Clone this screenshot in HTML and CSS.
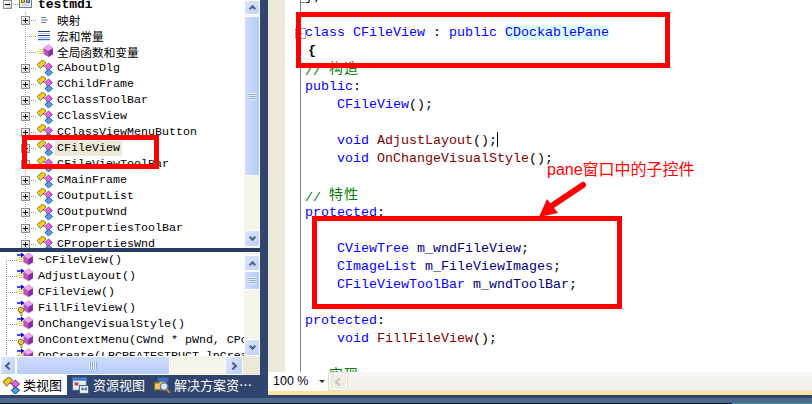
FILE: index.html
```html
<!DOCTYPE html>
<html lang="zh">
<head>
<meta charset="utf-8">
<title>testmdi</title>
<link rel="stylesheet" href="styles.css">
</head>
<body>
<svg class="defs" width="0" height="0" aria-hidden="true">
  <symbol id="cls" viewBox="0 0 16 16">
    <path d="M5 6H10M10 6V12" fill="none" stroke="#555" stroke-width="1"/>
    <polygon points="0,4.500 5.500,0 9,3 3.500,8.500" fill="#f4c92e" stroke="#9a7c18"/>
    <polygon points="8,6.500 11.500,3 15.500,6.500 11.500,10" fill="#ee62e4" stroke="#8e3c9e"/>
    <polygon points="8,12.500 12,9.500 15.500,12.500 11.500,16" fill="#4ea4ec" stroke="#205fa8"/>
  </symbol>
  <symbol id="cube" viewBox="0 0 16 16">
    <polygon points="6.500,4 11.500,0.500 16.500,4 16.500,10 11.500,13 6.500,10" fill="#b650cc"/>
    <polygon points="6.500,4 11.500,0.500 16.500,4 11.500,7" fill="#eaa4f2"/>
    <polygon points="11.500,7 16.500,4 16.500,10 11.500,13" fill="#86309a"/>
  </symbol>
  <symbol id="lines" viewBox="0 0 16 16">
    <path d="M2 5.500H7M0 7.500H7M2 9.500H7" stroke="#e4d060" stroke-width="1.200" fill="none"/>
  </symbol>
  <symbol id="arrow" viewBox="0 0 16 16">
    <path d="M0 3H6" stroke="#0000c0" stroke-width="1.400"/>
    <polygon points="4,0.500 7.500,3 4,5.500" fill="#0000c0"/>
  </symbol>
  <symbol id="key" viewBox="0 0 16 16">
    <circle cx="4" cy="10" r="2.800" fill="#ecc53e" stroke="#8e7014"/>
    <path d="M4 12.500V16M4 15H6" stroke="#a88820" stroke-width="1.200" fill="none"/>
  </symbol>
  <symbol id="macro" viewBox="0 0 16 16">
    <path d="M1 3.500H13" stroke="#20408c" stroke-width="1"/>
    <path d="M1 5.500H13" stroke="#a8c4ec" stroke-width="1"/>
    <path d="M1 7.500H13" stroke="#20408c" stroke-width="1"/>
    <path d="M1 9.500H13" stroke="#a8c4ec" stroke-width="1"/>
    <path d="M1 11.500H13" stroke="#3a6cc4" stroke-width="1.400"/>
  </symbol>
  <symbol id="map" viewBox="0 0 16 16">
    <path d="M4 5.500H9M4 8H11M4 10.500H9" stroke="#6a7fa8" stroke-width="1"/>
  </symbol>
  <symbol id="proj" viewBox="0 0 17 16">
    <rect x="1.500" y="3.500" width="12" height="11" fill="#f4f0e0" stroke="#6c7a90"/>
    <rect x="3.500" y="6.500" width="3" height="3" fill="#e8b838" stroke="#8a7020"/>
    <rect x="8.500" y="6.500" width="3" height="3" fill="#7ea4dc" stroke="#4a6a9c"/>
    <rect x="3.500" y="11" width="8" height="2" fill="#c8d0dc"/>
    <path d="M13 0V6M10 3H16" stroke="#e8b020" stroke-width="2"/>
  </symbol>
  <symbol id="res" viewBox="0 0 16 16">
    <rect x="0.500" y="0.500" width="13" height="12" fill="#e8f0fc" stroke="#3a68b0"/>
    <rect x="1" y="1" width="12" height="2.500" fill="#3a78d0"/>
    <rect x="2.500" y="5" width="3.500" height="3" fill="#d84030"/>
    <rect x="7" y="8" width="8.500" height="7.500" fill="#f0f0f0" stroke="#50607c"/>
    <rect x="9" y="10" width="2" height="2.500" fill="#3a68b0"/>
    <rect x="12" y="10" width="2" height="2.500" fill="#3a68b0"/>
  </symbol>
  <symbol id="sol" viewBox="0 0 16 16">
    <path d="M0.500 5.500H4.500L6 3.500H11V12H0.500Z" fill="#f0cc5c" stroke="#8a7020"/>
    <rect x="3.500" y="0.500" width="10" height="4" fill="#3a70c0"/>
    <circle cx="9.500" cy="9" r="3.500" fill="#d8ecf8" stroke="#607890" stroke-width="1.300"/>
    <path d="M12 11.500L15 15" stroke="#b08830" stroke-width="2"/>
  </symbol>
</svg>

<div class="app">
  <div class="main">
    <aside class="side">
      <div class="pane pane-top">
        <ul class="tree">
          <li class="row root"><span class="exp minus"></span><svg class="ic root-ic"><use href="#proj"/></svg><b class="root-name">testmdi</b></li>
          <li class="row"><span class="exp"></span><svg class="ic"><use href="#map"/></svg><span>映射</span></li>
          <li class="row"><span class="exp none"></span><svg class="ic"><use href="#macro"/></svg><span>宏和常量</span></li>
          <li class="row"><span class="exp none"></span><svg class="ic"><use href="#lines"/><use href="#cube"/></svg><span>全局函数和变量</span></li>
          <li class="row"><span class="exp"></span><svg class="ic"><use href="#cls"/></svg><span>CAboutDlg</span></li>
          <li class="row"><span class="exp"></span><svg class="ic"><use href="#cls"/></svg><span>CChildFrame</span></li>
          <li class="row"><span class="exp"></span><svg class="ic"><use href="#cls"/></svg><span>CClassToolBar</span></li>
          <li class="row"><span class="exp"></span><svg class="ic"><use href="#cls"/></svg><span>CClassView</span></li>
          <li class="row"><span class="exp"></span><svg class="ic"><use href="#cls"/></svg><span>CClassViewMenuButton</span></li>
          <li class="row"><span class="exp"></span><svg class="ic"><use href="#cls"/></svg><span class="sel">CFileView</span></li>
          <li class="row"><span class="exp"></span><svg class="ic"><use href="#cls"/></svg><span>CFileViewToolBar</span></li>
          <li class="row"><span class="exp"></span><svg class="ic"><use href="#cls"/></svg><span>CMainFrame</span></li>
          <li class="row"><span class="exp"></span><svg class="ic"><use href="#cls"/></svg><span>COutputList</span></li>
          <li class="row"><span class="exp"></span><svg class="ic"><use href="#cls"/></svg><span>COutputWnd</span></li>
          <li class="row"><span class="exp"></span><svg class="ic"><use href="#cls"/></svg><span>CPropertiesToolBar</span></li>
          <li class="row"><span class="exp"></span><svg class="ic"><use href="#cls"/></svg><span>CPropertiesWnd</span></li>
        </ul>
        <div class="vbar">
          <span class="btn up"><i></i></span>
          <span class="thumb thumb-a"><i class="grip"></i></span>
          <span class="track"></span>
          <span class="btn down"><i></i></span>
        </div>
      </div>
      <div class="split"></div>
      <div class="pane pane-low">
        <ul class="members">
          <li class="mrow"><svg class="ic"><use href="#lines"/><use href="#arrow"/><use href="#cube"/></svg><span>~CFileView()</span></li>
          <li class="mrow"><svg class="ic"><use href="#lines"/><use href="#arrow"/><use href="#cube"/></svg><span>AdjustLayout()</span></li>
          <li class="mrow"><svg class="ic"><use href="#lines"/><use href="#arrow"/><use href="#cube"/></svg><span>CFileView()</span></li>
          <li class="mrow"><svg class="ic"><use href="#arrow"/><use href="#key"/><use href="#cube"/></svg><span>FillFileView()</span></li>
          <li class="mrow"><svg class="ic"><use href="#lines"/><use href="#arrow"/><use href="#cube"/></svg><span>OnChangeVisualStyle()</span></li>
          <li class="mrow"><svg class="ic"><use href="#arrow"/><use href="#key"/><use href="#cube"/></svg><span>OnContextMenu(CWnd * pWnd, CPoint point)</span></li>
          <li class="mrow"><svg class="ic"><use href="#lines"/><use href="#arrow"/><use href="#cube"/></svg><span>OnCreate(LPCREATESTRUCT lpCreateStruct)</span></li>
        </ul>
        <div class="vbar">
          <span class="btn up low-up"><i></i></span>
          <span class="thumb thumb-b"><i class="grip"></i></span>
          <span class="track"></span>
          <span class="btn down"><i></i></span>
        </div>
      </div>
      <div class="hbar">
        <span class="hbtn left"><i></i></span>
        <span class="hthumb"><i class="hgrip"></i></span>
        <span class="htrack"></span>
        <span class="hbtn right"><i></i></span>
        <span class="corner"></span>
      </div>
      <nav class="tabs">
        <span class="tab active"><svg class="tab-ic"><use href="#cls"/></svg>类视图</span>
        <span class="tab"><svg class="tab-ic"><use href="#res"/></svg>资源视图</span>
        <span class="tab"><svg class="tab-ic"><use href="#sol"/></svg>解决方案资…</span>
      </nav>
    </aside>

    <section class="editor">
      <div class="strip"></div>
      <div class="doc">
        <div class="surface">
          <div class="margin"></div>
          <div class="code">
            <div class="ln fold-end"><span>};</span></div>
            <div class="ln">&nbsp;</div>
            <div class="ln fold"><span class="k">class CFileView</span> : <span class="k">public</span> <span class="k hl">CDockablePane</span></div>
            <div class="ln brace"><b>{</b></div>
            <div class="ln c">// <span class="cjk">构造</span></div>
            <div class="ln"><span class="k">public</span>:</div>
            <div class="ln">    <span class="k">CFileView</span>();</div>
            <div class="ln">&nbsp;</div>
            <div class="ln">    <span class="k">void</span> <span class="f">AdjustLayout</span>();<span class="caret"></span></div>
            <div class="ln">    <span class="k">void</span> <span class="f">OnChangeVisualStyle</span>();</div>
            <div class="ln">&nbsp;</div>
            <div class="ln c">// <span class="cjk">特性</span></div>
            <div class="ln"><span class="k">protected</span>:</div>
            <div class="ln">&nbsp;</div>
            <div class="ln">    <span class="k">CViewTree</span> <span class="v">m_wndFileView</span>;</div>
            <div class="ln">    <span class="k">CImageList</span> <span class="v">m_FileViewImages</span>;</div>
            <div class="ln">    <span class="k">CFileViewToolBar</span> <span class="v">m_wndToolBar</span>;</div>
            <div class="ln">&nbsp;</div>
            <div class="ln"><span class="k">protected</span>:</div>
            <div class="ln">    <span class="k">void</span> <span class="f">FillFileView</span>();</div>
            <div class="ln">&nbsp;</div>
            <div class="ln c">// <span class="cjk">实现</span></div>
          </div>
        </div>
        <div class="status">
          <span class="zoom">100 %<i class="caret-down"></i></span>
          <span class="sbtn"><i></i></span>
        </div>
        <div class="rule"></div>
      </div>
    </section>
  </div>
  <div class="foot"><div class="foot-a"></div><div class="foot-b"></div><div class="foot-c"><span class="foot-teal"></span></div></div>

  <div class="mark box-a"></div>
  <div class="mark box-b"></div>
  <div class="mark box-c"></div>
  <div class="note">pane窗口中的子控件</div>
  <svg class="pointer" width="812" height="404" aria-hidden="true">
    <path d="M583 185L550 207" stroke="#ff0000" stroke-width="6" stroke-linecap="round"/>
    <polygon points="539,217 547,199 558,213" fill="#ff0000"/>
  </svg>
</div>
</body>
</html>
```

FILE: styles.css
```css
* { box-sizing: border-box; }
html, body { margin: 0; padding: 0; background: #fff; overflow: hidden; }
.defs { display: block; height: 0; width: 0; }
ul { list-style: none; margin: 0; padding: 0; }

.app {
  position: relative;
  width: 812px;
  height: 404px;
  overflow: hidden;
  display: flex;
  flex-direction: column;
  font-family: "Liberation Mono", "Noto Sans CJK SC", monospace;
}
.main { display: flex; height: 395px; }

/* left column */
.side { width: 260px; display: flex; flex-direction: column; background: #fff; }
.pane { display: flex; overflow: hidden; background: #fff; }
.pane-top { height: 248px; }
.pane-low { height: 104px; }
.split { height: 4px; background: #2a3d63; }

.tree { width: 244px; margin-top: -4px; overflow: hidden; }
.row {
  height: 16px;
  display: flex;
  align-items: center;
  padding-left: 21px;
  font-size: 11.67px;
  color: #000;
  white-space: nowrap;
  background-image:
    repeating-linear-gradient(to bottom, #999 0 1px, transparent 1px 2px),
    repeating-linear-gradient(to right, #999 0 1px, transparent 1px 2px);
  background-size: 1px 16px, 12px 1px;
  background-position: 25px 0, 25px 8px;
  background-repeat: no-repeat;
}
.row.root {
  padding-left: 3px;
  background-image: repeating-linear-gradient(to right, #999 0 1px, transparent 1px 2px);
  background-size: 8px 1px;
  background-position: 11px 8px;
}
.root .exp { margin-right: 6px; }
.root-name { font-size: 13px; font-weight: 700; margin-left: 3px; }
.exp {
  position: relative;
  width: 9px;
  height: 9px;
  flex: none;
  margin-right: 7px;
  border: 1px solid #8a8f9a;
  background: linear-gradient(135deg, #fff, #d4d0c4);
}
.exp::before { content: ""; position: absolute; left: 1px; top: 3px; width: 5px; height: 1px; background: #000; }
.exp::after { content: ""; position: absolute; left: 3px; top: 1px; width: 1px; height: 5px; background: #000; }
.exp.minus::after { display: none; }
.exp.none { visibility: hidden; }
.ic { width: 16px; height: 16px; flex: none; margin-right: 4px; display: block; overflow: visible; }
.root-ic { width: 17px; margin-right: 0; margin-top: -6px; }
.sel { background: #ece9d8; line-height: 15px; margin-left: -2px; padding: 0 2px; }

.members { width: 244px; overflow: hidden; }
.mrow {
  height: 16px;
  display: flex;
  align-items: center;
  padding-left: 17px;
  font-size: 11.67px;
  white-space: nowrap;
  background-image:
    repeating-linear-gradient(to bottom, #999 0 1px, transparent 1px 2px),
    repeating-linear-gradient(to right, #999 0 1px, transparent 1px 2px);
  background-size: 1px 16px, 11px 1px;
  background-position: 6px 0, 6px 8px;
  background-repeat: no-repeat;
}
.mrow:first-child { background-size: 1px 8px, 11px 1px; background-position: 6px 8px, 6px 8px; }
.mrow .ic { margin-right: 5px; }

/* scrollbars */
.vbar { width: 16px; flex: none; display: flex; flex-direction: column; background: #f6f5ec; }
.btn {
  flex: none;
  height: 17px;
  display: flex;
  align-items: center;
  justify-content: center;
  background: linear-gradient(135deg, #dde7fd, #bdd0fb);
  border: 1px solid #fff;
  border-radius: 2px;
}
.btn i { width: 5px; height: 5px; border-left: 2px solid #4d6185; border-top: 2px solid #4d6185; }
.btn.up i { transform: translateY(1px) rotate(45deg); }
.btn.down i { transform: translateY(-1px) rotate(225deg); }
.btn.up { height: 15px; }
.low-up { margin-top: 3px; height: 16px !important; }
.thumb {
  flex: none;
  display: flex;
  align-items: center;
  justify-content: center;
  background: linear-gradient(to right, #cfdcfb, #b6cbfa);
  border: 1px solid #fff;
  border-radius: 2px;
}
.thumb-a { height: 160px; margin-top: 1px; }
.thumb-b { height: 19px; }
.track { flex: 1; }
.pane-top .btn.down { margin-bottom: 1px; }
.pane-low .btn.down { margin-bottom: 0; }
.grip {
  display: block;
  width: 7px;
  height: 7px;
  background: repeating-linear-gradient(to bottom, #eef3fe 0 1px, #8ba6dc 1px 2px);
}

.hbar { height: 19px; display: flex; background: #f6f5ec; }
.hbtn {
  width: 16px;
  flex: none;
  display: flex;
  align-items: center;
  justify-content: center;
  background: linear-gradient(135deg, #dde7fd, #bdd0fb);
  border: 1px solid #fff;
  border-radius: 2px;
}
.hbtn i { width: 6px; height: 6px; border-left: 2px solid #4d6185; border-top: 2px solid #4d6185; }
.hbtn.left i { transform: translateX(1px) rotate(-45deg); }
.hbtn.right i { transform: translateX(-1px) rotate(135deg); }
.hthumb {
  width: 154px;
  flex: none;
  display: flex;
  align-items: center;
  justify-content: center;
  background: linear-gradient(to bottom, #cfdcfb, #b6cbfa);
  border: 1px solid #fff;
  border-radius: 2px;
}
.hgrip {
  width: 8px;
  height: 7px;
  background: repeating-linear-gradient(to right, #eef3fe 0 1px, #8ba6dc 1px 2px);
}
.htrack { width: 55px; flex: none; }
.hbar .right { width: 18px; }
.corner { width: 17px; flex: none; background: #ece9d8; }

/* tabs */
.tabs {
  height: 20px;
  display: flex;
  background: #2c4068 repeating-conic-gradient(#2c4068 0 25%, #344a75 0 50%) 0 0 / 2px 2px;
  color: #fff;
  font-family: "Noto Sans CJK SC", sans-serif;
  font-size: 13px;
  line-height: 20px;
}
.tab { display: flex; align-items: center; white-space: nowrap; }
.tab:nth-child(1) { width: 67px; padding-left: 3px; background: #fff; color: #000; }
.tab:nth-child(2) { width: 87px; padding-left: 5px; }
.tab:nth-child(3) { padding-left: 0; }
.tab-ic { width: 17px; height: 17px; margin-right: 3px; flex: none; }
.tab:nth-child(2) .tab-ic { margin-right: 4px; }

/* editor */
.editor { flex: 1; display: flex; }
.strip { width: 8px; flex: none; background: #2c4068 repeating-conic-gradient(#2c4068 0 25%, #344a75 0 50%) 0 0 / 2px 2px; }
.doc { flex: 1; display: flex; flex-direction: column; }
.surface { height: 372px; display: flex; overflow: hidden; background: #fff; }
.margin { width: 17px; flex: none; background: #ece9d8; }
.code {
  margin-left: 15px;
  margin-top: -12px;
  padding-left: 4px;
  border-left: 1px solid #808080;
  flex: 1;
  font-size: 13.33px;
  color: #000;
}
.ln { position: relative; height: 18px; line-height: 18px; white-space: pre; }
.k { color: #0000ff; }
.f { color: #800000; }
.v { color: #000080; }
.c { color: #008000; }
.hl { background: #e0ffff; }
.cjk { font-family: "Noto Sans CJK SC", sans-serif; font-size: 14px; letter-spacing: 1px; position: relative; top: -2px; }
.brace { padding-left: 3px; }
.fold::before {
  content: "";
  position: absolute;
  left: -10px;
  top: 4px;
  width: 9px;
  height: 9px;
  border: 1px solid #a0a0a0;
  background: linear-gradient(#a0a0a0, #a0a0a0) center / 5px 1px no-repeat #fff;
}
.fold-end::before {
  content: "";
  position: absolute;
  left: -4px;
  top: 14px;
  width: 4px;
  height: 1px;
  background: #808080;
}
.caret { display: inline-block; width: 1px; height: 15px; background: #000; vertical-align: -3px; }

.status {
  height: 19px;
  display: flex;
  align-items: center;
  background: linear-gradient(#f8f7f3, #efede5);
}
.zoom {
  position: relative;
  width: 60px;
  height: 19px;
  padding-left: 5px;
  background: #fff;
  font-family: "Liberation Sans", sans-serif;
  font-size: 12.500px;
  line-height: 19px;
}
.caret-down {
  position: absolute;
  right: 3px;
  top: 8px;
  border: 3px solid transparent;
  border-top: 3px solid #333;
  border-bottom: 0;
}
.sbtn {
  width: 18px;
  height: 17px;
  margin-left: 1px;
  display: flex;
  align-items: center;
  justify-content: center;
  background: #efede4;
  border: 1px solid #fff;
  box-shadow: 0 0 0 1px #dedccf;
  border-radius: 2px;
}
.sbtn i { width: 6px; height: 6px; border-left: 2px solid #c8c6bc; border-top: 2px solid #c8c6bc; transform: translateX(1px) rotate(-45deg); }
.rule { height: 4px; background: #fbe3a0; }

.foot { height: 9px; display: flex; flex-direction: column; }
.foot-a { height: 3px; background: #2c4068 repeating-conic-gradient(#2c4068 0 25%, #344a75 0 50%) 0 0 / 2px 2px; }
.foot-b { height: 5px; background: #4e6a8f; }
.foot-c { height: 1px; background: #0a1420; display: flex; justify-content: flex-end; }
.foot-teal { width: 80px; background: #3c9a9a; }

/* annotations lying over the screenshot */
.mark { position: absolute; border: 5px solid #ff0000; pointer-events: none; }
.box-a { left: 296px; top: 12px; width: 374px; height: 56px; }
.box-b { left: 22px; top: 135px; width: 137px; height: 34px; }
.box-c { left: 312px; top: 216px; width: 310px; height: 93px; }
.note {
  position: absolute;
  left: 547px;
  top: 160px;
  color: #ff0000;
  font-family: "Liberation Sans", "Noto Sans CJK SC", sans-serif;
  font-size: 16px;
  line-height: 20px;
  white-space: nowrap;
}
.pointer { position: absolute; left: 0; top: 0; pointer-events: none; }
```
